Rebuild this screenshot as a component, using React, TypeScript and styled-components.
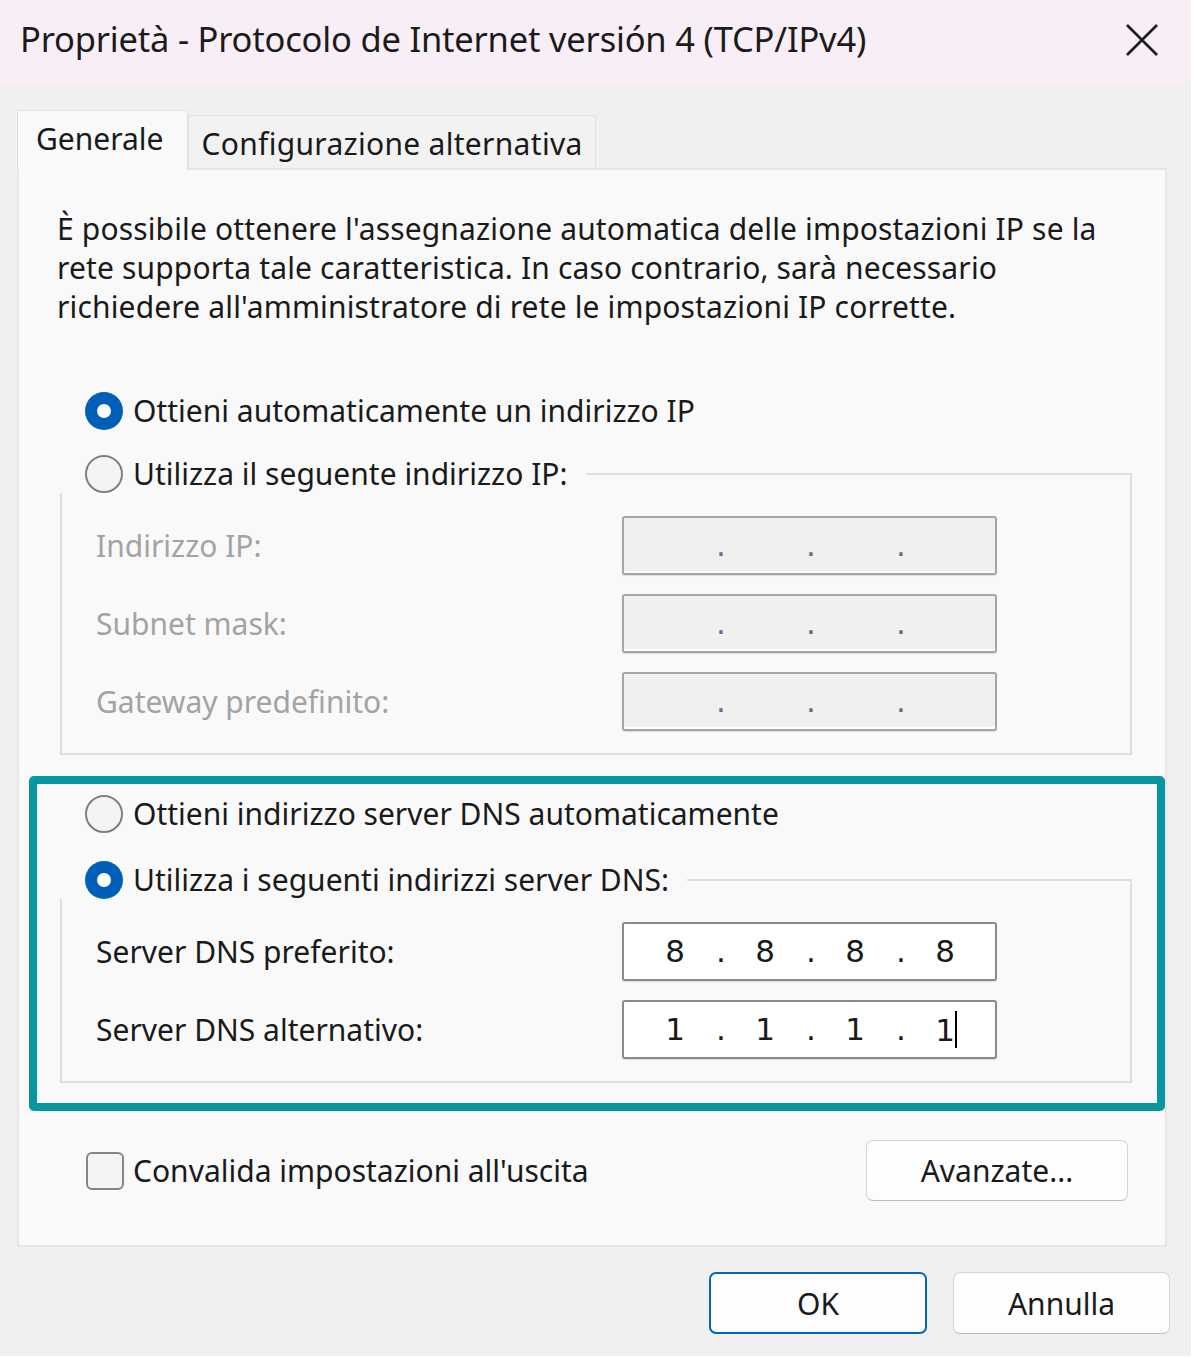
import { Fragment } from 'react';
import styled, { createGlobalStyle } from 'styled-components';

const UI_FONT = `'Noto Sans', 'Open Sans', 'Liberation Sans', sans-serif`;
const IP_FONT = `'DejaVu Sans', 'Liberation Sans', sans-serif`;

const staticRows = ['Indirizzo IP:', 'Subnet mask:', 'Gateway predefinito:'];

const dnsRows = [
  { label: 'Server DNS preferito:', value: ['8', '8', '8', '8'], caret: false },
  { label: 'Server DNS alternativo:', value: ['1', '1', '1', '1'], caret: true },
];

type IpFieldProps = {
  value?: string[];
  caret?: boolean;
  disabled?: boolean;
};

const IpField = ({ value, caret = false, disabled = false }: IpFieldProps) => (
  <SIpBox $disabled={disabled}>
    {[0, 1, 2, 3].map((i) => (
      <Fragment key={i}>
        <SOctet>
          {value ? value[i] : ''}
          {caret && i === 3 && <SCaret />}
        </SOctet>
        {i < 3 && <SDot $disabled={disabled}>.</SDot>}
      </Fragment>
    ))}
  </SIpBox>
);

const CloseIcon = () => (
  <svg width="34" height="34" viewBox="0 0 34 34">
    <path d="M2 2 L32 32 M32 2 L2 32" stroke="#1b1b1b" strokeWidth="2.6" fill="none" />
  </svg>
);

const App = () => {
  return (
    <>
      <GlobalStyle />
      <SWindow>
        <STitleBar>
          <STitle>Proprietà - Protocolo de Internet versión 4 (TCP/IPv4)</STitle>
          <CloseIcon />
        </STitleBar>

        <SBody>
          <STabStrip>
            <STab $active>Generale</STab>
            <STab>Configurazione alternativa</STab>
          </STabStrip>

          <SPanel>
            <SDescription>
              È possibile ottenere l'assegnazione automatica delle impostazioni IP se la
              <br />
              rete supporta tale caratteristica. In caso contrario, sarà necessario
              <br />
              richiedere all'amministratore di rete le impostazioni IP corrette.
            </SDescription>

            <SRadioRow $top={65}>
              <SRadio $checked />
              <span>Ottieni automaticamente un indirizzo IP</span>
            </SRadioRow>

            <SGroup>
              <SLegend>
                <SRadioRow>
                  <SRadio />
                  <span>Utilizza il seguente indirizzo IP:</span>
                </SRadioRow>
              </SLegend>
              {staticRows.map((label) => (
                <SFieldRow key={label} $disabled>
                  <span>{label}</span>
                  <IpField disabled />
                </SFieldRow>
              ))}
            </SGroup>

            <SHighlight>
              <SRadioRow>
                <SRadio />
                <span>Ottieni indirizzo server DNS automaticamente</span>
              </SRadioRow>

              <SGroup $top={27}>
                <SLegend>
                  <SRadioRow>
                    <SRadio $checked />
                    <span>Utilizza i seguenti indirizzi server DNS:</span>
                  </SRadioRow>
                </SLegend>
                {dnsRows.map((row) => (
                  <SFieldRow key={row.label}>
                    <span>{row.label}</span>
                    <IpField value={row.value} caret={row.caret} />
                  </SFieldRow>
                ))}
              </SGroup>
            </SHighlight>

            <SBottomRow>
              <SCheckRow>
                <SCheckbox />
                <span>Convalida impostazioni all'uscita</span>
              </SCheckRow>
              <SButton $width={262} $height={61}>
                Avanzate...
              </SButton>
            </SBottomRow>
          </SPanel>
        </SBody>

        <SFooter>
          <SButton $width={218} $height={62} $primary>
            OK
          </SButton>
          <SButton $width={217} $height={62}>
            Annulla
          </SButton>
        </SFooter>
      </SWindow>
    </>
  );
};

export default App;

const GlobalStyle = createGlobalStyle`
  html, body {
    margin: 0;
    background: #ffffff;
  }
  * {
    box-sizing: border-box;
  }
`;

const SWindow = styled.div`
  display: flex;
  flex-direction: column;

  width: 1191px;
  height: 1356px;

  background-color: #f0f0f0;
  font-family: ${UI_FONT};
  color: #1a1a1a;
`;

const STitleBar = styled.div`
  display: flex;
  align-items: center;
  justify-content: space-between;

  height: 85px;
  padding: 0 32px 6px 20px;

  background-color: #f8eef5;
`;

const STitle = styled.div`
  font-size: 34.5px;
  line-height: 1;
  letter-spacing: -0.2px;
  color: #1b1b1b;
`;

const SBody = styled.div`
  display: flex;
  flex-direction: column;

  padding: 25px 24px 0 17px;
`;

const STabStrip = styled.div`
  display: flex;
  align-items: flex-end;
`;

const STab = styled.div<{ $active?: boolean }>`
  position: relative;
  z-index: 1;

  height: ${({ $active }) => ($active ? '60px' : '53px')};
  margin-bottom: ${({ $active }) => ($active ? '-2px' : '0')};
  padding: 8px ${({ $active }) => ($active ? '23px' : '12px')} 0
    ${({ $active }) => ($active ? '18px' : '13px')};

  border: 1px solid #e2e2e2;
  border-bottom: none;
  background-color: ${({ $active }) => ($active ? '#f9f9f9' : '#f2f2f2')};

  font-size: 30px;
  line-height: 39px;
  letter-spacing: ${({ $active }) => ($active ? '0' : '0.3px')};
  white-space: nowrap;
`;

const SPanel = styled.div`
  display: flex;
  flex-direction: column;

  width: 1150px;
  padding: 39px 33px 44px 41px;

  border: 2px solid #e6e6e6;
  background-color: #f9f9f9;

  font-size: 30px;
`;

const SDescription = styled.p`
  margin: 0 0 0 -3px;

  line-height: 39px;
  letter-spacing: 0.15px;
  white-space: nowrap;
`;

const SRadioRow = styled.div<{ $top?: number }>`
  display: flex;
  align-items: center;
  gap: 10px;

  height: 39px;
  margin: ${({ $top }) => $top ?? 0}px 0 0 25px;

  line-height: 39px;
  white-space: nowrap;
`;

const SRadio = styled.span<{ $checked?: boolean }>`
  position: relative;
  flex-shrink: 0;

  width: 38px;
  height: 38px;

  border-radius: 50%;
  border: ${({ $checked }) => ($checked ? 'none' : '2.5px solid #808080')};
  background-color: ${({ $checked }) => ($checked ? '#005fb8' : '#f4f4f4')};

  &::after {
    content: '';
    display: ${({ $checked }) => ($checked ? 'block' : 'none')};
    position: absolute;
    top: 12px;
    left: 12px;
    width: 14px;
    height: 14px;
    border-radius: 50%;
    background-color: #ffffff;
  }
`;

const SGroup = styled.fieldset<{ $top?: number }>`
  display: flex;
  flex-direction: column;
  gap: 19px;

  margin: ${({ $top }) => $top ?? 24}px 0 0;
  padding: 23px 133px 22px 23px;

  border: 2px solid #dedede;
  min-width: 0;
`;

const SLegend = styled.legend`
  padding: 0 18px 0 0;
  margin-left: -25px;
`;

const SFieldRow = styled.div<{ $disabled?: boolean }>`
  display: flex;
  align-items: center;
  justify-content: space-between;

  height: 59px;
  padding-left: 11px;

  color: ${({ $disabled }) => ($disabled ? '#a3a3a3' : '#1a1a1a')};
  white-space: nowrap;
`;

const SIpBox = styled.div<{ $disabled?: boolean }>`
  display: grid;
  grid-template-columns: 44px 46px 44px 46px 44px 46px 44px;
  align-items: center;

  width: 375px;
  height: 59px;
  padding: 0 0 0 29px;

  border: 2px solid ${({ $disabled }) => ($disabled ? '#a5a5a5' : '#8a8a8a')};
  border-radius: 3px;
  background-color: ${({ $disabled }) => ($disabled ? '#f0f0f0' : '#ffffff')};
  box-shadow: inset 0 -2px 0 #ffffff, 0 1px 1px rgba(0, 0, 0, 0.12);

  font-family: ${IP_FONT};
  font-size: 31px;
  line-height: 1;
  color: #1a1a1a;
`;

const SOctet = styled.span`
  text-align: center;
  white-space: nowrap;
`;

const SDot = styled.span<{ $disabled?: boolean }>`
  padding-left: 2px;
  text-align: center;
  color: ${({ $disabled }) => ($disabled ? '#6a6a8c' : '#1a1a1a')};
`;

const SCaret = styled.span`
  display: inline-block;
  width: 2px;
  height: 37px;
  margin-right: -2px;

  vertical-align: -7px;
  background-color: #000000;
`;

const SHighlight = styled.div`
  display: flex;
  flex-direction: column;

  margin: 21px -33px 0 -31px;
  padding: 10px 25px 20px 23px;

  border: 8px solid #07979f;
  border-radius: 5px;
`;

const SBottomRow = styled.div`
  display: flex;
  align-items: center;
  justify-content: space-between;

  margin-top: 29px;
  padding: 0 4px 0 26px;
`;

const SCheckRow = styled.div`
  display: flex;
  align-items: center;
  gap: 9px;

  white-space: nowrap;
`;

const SCheckbox = styled.span`
  width: 38px;
  height: 38px;

  border: 2.5px solid #858585;
  border-radius: 6px;
  background-color: #f4f4f4;
`;

const SButton = styled.button<{ $width: number; $height: number; $primary?: boolean }>`
  display: flex;
  align-items: center;
  justify-content: center;

  width: ${({ $width }) => $width}px;
  height: ${({ $height }) => $height}px;
  padding: 0;

  border: ${({ $primary }) => ($primary ? '2.5px solid #0067c0' : '1.5px solid #d5d5d5')};
  border-bottom-color: ${({ $primary }) => ($primary ? '#0067c0' : '#bdbdbd')};
  border-radius: 7px;
  background-color: #fdfdfd;

  font-family: ${UI_FONT};
  font-size: 30px;
  color: #1a1a1a;
`;

const SFooter = styled.div`
  display: flex;
  justify-content: flex-end;
  gap: 26px;

  padding: 25px 21px 0 0;
`;
